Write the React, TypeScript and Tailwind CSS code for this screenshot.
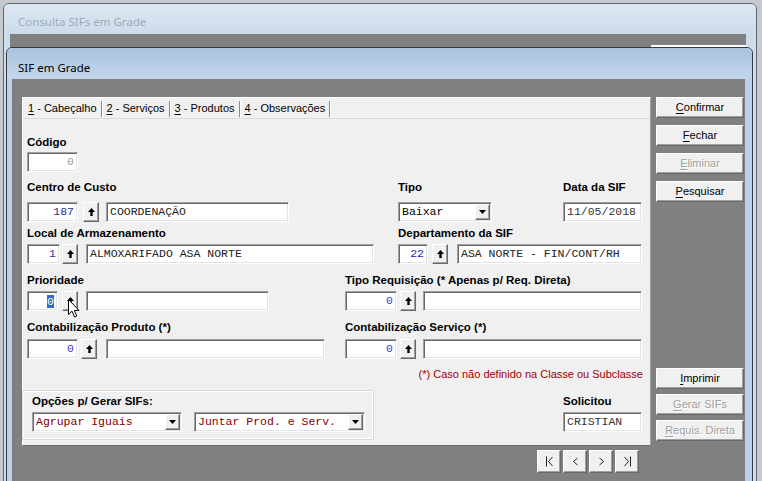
import React from 'react';

const sans = "font-['Liberation_Sans',Arial,sans-serif]";
const mono = "font-['Liberation_Mono','Courier_New',monospace]";
const raised =
  'bg-[#f0f0f0] border border-t-white border-l-white border-b-[#696969] border-r-[#696969] shadow-[inset_-1px_-1px_0_#a0a0a0]';
const sunken =
  'bg-white border border-t-[#a0a0a0] border-l-[#a0a0a0] border-b-white border-r-white shadow-[inset_1px_1px_0_#696969,inset_-1px_-1px_0_#e3e3e3]';

function Label({ children }: { children: React.ReactNode }) {
  return (
    <div className={`h-[14px] leading-[14px] text-[11.5px] font-bold text-black whitespace-nowrap ${sans}`}>
      {children}
    </div>
  );
}

function NumField({
  w,
  value,
  color = 'text-[#2b2ba0]',
  selected,
  className = '',
}: {
  w: string;
  value: string;
  color?: string;
  selected?: boolean;
  className?: string;
}) {
  return (
    <div className={`${sunken} ${w} ${className} h-[20px] flex items-center justify-end pr-[3px] text-[11.5px] ${mono} ${color}`}>
      {selected ? <span className="bg-[#3169c6] text-white leading-[13px]">{value}</span> : value}
    </div>
  );
}

function TextField({ w, value = '', color = 'text-[#222]', className = '' }: { w: string; value?: string; color?: string; className?: string }) {
  return (
    <div className={`${sunken} ${w} ${className} h-[20px] flex items-center pl-[3px] text-[11.5px] whitespace-nowrap overflow-hidden ${mono} ${color}`}>
      {value}
    </div>
  );
}

function ArrowBtn({ className = '' }: { className?: string }) {
  return (
    <div className={`${raised} ${className} w-[16px] h-[20px] flex items-center justify-center`}>
      <svg width="7" height="8" viewBox="0 0 7 8">
        <path d="M3.5 0 L7 4 H4.7 V8 H2.3 V4 H0 Z" fill="#000" />
      </svg>
    </div>
  );
}

function Select({ w, value, color = 'text-black', className = '' }: { w: string; value: string; color?: string; className?: string }) {
  return (
    <div className={`${sunken} ${w} ${className} h-[20px] flex items-center pl-[3px] pr-[1px] text-[11.5px] ${mono} ${color}`}>
      <span className="flex-1 whitespace-nowrap overflow-hidden">{value}</span>
      <div className={`${raised} w-[15px] h-[16px] flex items-center justify-center`}>
        <svg width="7" height="4" viewBox="0 0 7 4">
          <path d="M0 0 H7 L3.5 4 Z" fill="#000" />
        </svg>
      </div>
    </div>
  );
}

function Btn({ label, u, disabled, className = '' }: { label: string; u: number; disabled?: boolean; className?: string }) {
  return (
    <div
      className={`${raised} ${className} h-[21px] w-[88px] flex items-center justify-center text-[11px] ${sans} ${
        disabled ? 'text-[#a0a0a0] [text-shadow:1px_1px_0_#fff]' : 'text-black'
      }`}
    >
      {label.slice(0, u)}
      <span className="underline underline-offset-2">{label[u]}</span>
      {label.slice(u + 1)}
    </div>
  );
}

function NavBtn({ kind }: { kind: 'first' | 'prev' | 'next' | 'last' }) {
  return (
    <div className={`${raised} w-[24px] h-[23px] flex items-center justify-center`}>
      <svg width="9" height="11" viewBox="0 0 9 11" fill="none" stroke="#222" strokeWidth="1">
        {kind === 'first' && (
          <>
            <path d="M1.5 0.5 V10.5" />
            <path d="M7.5 1 L3.5 5.5 L7.5 10" />
          </>
        )}
        {kind === 'prev' && <path d="M6.5 2 L2.5 5.5 L6.5 9" />}
        {kind === 'next' && <path d="M2.5 2 L6.5 5.5 L2.5 9" />}
        {kind === 'last' && (
          <>
            <path d="M1.5 1 L5.5 5.5 L1.5 10" />
            <path d="M7.5 0.5 V10.5" />
          </>
        )}
      </svg>
    </div>
  );
}

const tabs = [
  { n: '1', t: ' - Cabeçalho' },
  { n: '2', t: ' - Serviços' },
  { n: '3', t: ' - Produtos' },
  { n: '4', t: ' - Observações' },
];

export default function App() {
  return (
    <div className="relative w-[762px] h-[481px] overflow-hidden bg-[#c6c9cd]">
      {/* janela de trás */}
      <div className="absolute left-[3px] top-[3px] w-[754px] h-[490px] rounded-t-[6px] border border-[#5d6670] bg-[#cfdcea] flex flex-col">
        <div className="h-[30px] rounded-t-[5px] bg-gradient-to-b from-[#dce7f2] to-[#cddbea] pl-[14px] pt-[11px] text-[11.5px] leading-[14px] text-[#9eabb9] font-['Noto_Sans',sans-serif]">
          Consulta SIFs em Grade
        </div>
        <div className="ml-[6px] w-[736px] flex-1 bg-[#808080] flex justify-end">
          <div className="mt-[11px] w-[95px] h-[4px] bg-white" />
        </div>
      </div>

      {/* janela da frente */}
      <div className="absolute left-[6px] top-[47px] w-[747px] h-[450px] rounded-t-[6px] border border-[#353a41] bg-[#bcd2ea] flex flex-col">
        <div className="h-[31px] rounded-t-[5px] bg-gradient-to-b from-[#a9c3df] to-[#c3d6eb] pl-[11px] pt-[13px] text-[11.5px] leading-[14px] text-black font-['Noto_Sans',sans-serif]">
          SIF em Grade
        </div>
        <div className="ml-[5px] w-[733px] flex-1 bg-[#808080] pt-[18px] pl-[10px]">
          <div className="flex">
            {/* painel de abas */}
            <div className="w-[629px] h-[349px] bg-[#f0f0f0] border border-t-white border-l-white border-r-[#a0a0a0] border-b-[#696969] flex flex-col">
              <div className={`h-[21px] flex items-center pl-[5px] pt-[1px] border-b border-[#dadada] text-[11px] text-black ${sans}`}>
                {tabs.map((tab) => (
                  <React.Fragment key={tab.n}>
                    <span className="whitespace-pre">
                      <span className="underline underline-offset-2">{tab.n}</span>
                      {tab.t}
                    </span>
                    <span className="mx-[4px] h-[16px] w-[2px] border-l border-[#8a8a8a] border-r border-r-white" />
                  </React.Fragment>
                ))}
              </div>

              <div className="flex flex-col">
                {/* Código */}
                <div className="pl-[4px] mt-[16px]">
                  <Label>Código</Label>
                  <NumField w="w-[51px]" value="0" color="text-[#a0a0a0]" className="mt-[3px]" />
                </div>

                {/* Centro de custo / Tipo / Data */}
                <div className="pl-[4px] mt-[8px] flex">
                  <div className="w-[371px]">
                    <Label>Centro de Custo</Label>
                    <div className="flex mt-[8px]">
                      <NumField w="w-[51px]" value="187" />
                      <ArrowBtn className="ml-[5px]" />
                      <TextField w="w-[183px]" className="ml-[7px]" value="COORDENAÇÃO" />
                    </div>
                  </div>
                  <div className="w-[165px]">
                    <Label>Tipo</Label>
                    <Select w="w-[94px]" value="Baixar" className="mt-[8px]" />
                  </div>
                  <div>
                    <Label>Data da SIF</Label>
                    <TextField w="w-[79px]" className="mt-[8px]" value="11/05/2018" color="text-[#333]" />
                  </div>
                </div>

                {/* Local / Departamento */}
                <div className="pl-[4px] mt-[4px] flex">
                  <div className="w-[371px]">
                    <Label>Local de Armazenamento</Label>
                    <div className="flex mt-[4px]">
                      <NumField w="w-[33px]" value="1" />
                      <ArrowBtn className="ml-[2px]" />
                      <TextField w="w-[288px]" className="ml-[8px]" value="ALMOXARIFADO ASA NORTE" />
                    </div>
                  </div>
                  <div>
                    <Label>Departamento da SIF</Label>
                    <div className="flex mt-[4px]">
                      <NumField w="w-[30px]" value="22" />
                      <ArrowBtn className="ml-[4px]" />
                      <TextField w="w-[185px]" className="ml-[9px]" value="ASA NORTE - FIN/CONT/RH" />
                    </div>
                  </div>
                </div>

                {/* Prioridade / Tipo Requisição */}
                <div className="pl-[4px] mt-[9px] flex">
                  <div className="w-[318px]">
                    <Label>Prioridade</Label>
                    <div className="flex mt-[4px]">
                      <NumField w="w-[31px]" value="0" selected />
                      <ArrowBtn className="ml-[4px]" />
                      <TextField w="w-[183px]" className="ml-[8px]" />
                    </div>
                  </div>
                  <div>
                    <Label>Tipo Requisição (* Apenas p/ Req. Direta)</Label>
                    <div className="flex mt-[4px]">
                      <NumField w="w-[52px]" value="0" color="text-[#4040c0]" />
                      <ArrowBtn className="ml-[3px]" />
                      <TextField w="w-[219px]" className="ml-[7px]" />
                    </div>
                  </div>
                </div>

                {/* Contabilização */}
                <div className="pl-[4px] mt-[9px] flex">
                  <div className="w-[318px]">
                    <Label>Contabilização Produto (*)</Label>
                    <div className="flex mt-[5px]">
                      <NumField w="w-[51px]" value="0" color="text-[#4040c0]" />
                      <ArrowBtn className="ml-[3px]" />
                      <TextField w="w-[219px]" className="ml-[9px]" />
                    </div>
                  </div>
                  <div>
                    <Label>Contabilização Serviço (*)</Label>
                    <div className="flex mt-[5px]">
                      <NumField w="w-[52px]" value="0" color="text-[#4040c0]" />
                      <ArrowBtn className="ml-[3px]" />
                      <TextField w="w-[219px]" className="ml-[7px]" />
                    </div>
                  </div>
                </div>

                <div className={`mt-[8px] pr-[7px] h-[14px] leading-[14px] text-right text-[11px] text-[#a00000] ${sans}`}>
                  (*) Caso não definido na Classe ou Subclasse
                </div>

                {/* Opções / Solicitou */}
                <div className="mt-[10px] flex">
                  <div className="w-[350px] h-[48px] border border-white shadow-[0_0_0_1px_#dadada] pl-[8px] pt-[2px]">
                    <Label>Opções p/ Gerar SIFs:</Label>
                    <div className="flex mt-[4px]">
                      <Select w="w-[150px]" value="Agrupar Iguais" color="text-[#800000]" />
                      <Select w="w-[171px]" value="Juntar Prod. e Serv." color="text-[#800000]" className="ml-[12px]" />
                    </div>
                  </div>
                  <div className="ml-[190px] pt-[3px]">
                    <Label>Solicitou</Label>
                    <TextField w="w-[79px]" className="mt-[4px]" value="CRISTIAN" color="text-[#333]" />
                  </div>
                </div>
              </div>
            </div>

            {/* botões */}
            <div className="ml-[5px] flex flex-col">
              <Btn label="Confirmar" u={0} />
              <Btn label="Fechar" u={0} className="mt-[7px]" />
              <Btn label="Eliminar" u={0} disabled className="mt-[7px]" />
              <Btn label="Pesquisar" u={0} className="mt-[7px]" />
              <Btn label="Imprimir" u={0} className="mt-[166px]" />
              <Btn label="Gerar SIFs" u={0} disabled className="mt-[5px]" />
              <Btn label="Requis. Direta" u={0} disabled className="mt-[5px]" />
            </div>
          </div>

          <div className="flex gap-[2px] ml-[515px] mt-[4px]">
            <NavBtn kind="first" />
            <NavBtn kind="prev" />
            <NavBtn kind="next" />
            <NavBtn kind="last" />
          </div>
        </div>
      </div>

      {/* cursor do mouse */}
      <svg className="absolute left-[68px] top-[299px]" width="13" height="20" viewBox="0 0 13 20">
        <path d="M0.5 0.5 L0.5 15.5 L4 12.2 L6.6 18 L8.8 17 L6.3 11.4 L11 11.4 Z" fill="#fff" stroke="#000" strokeWidth="1" strokeLinejoin="miter" />
      </svg>
    </div>
  );
}
